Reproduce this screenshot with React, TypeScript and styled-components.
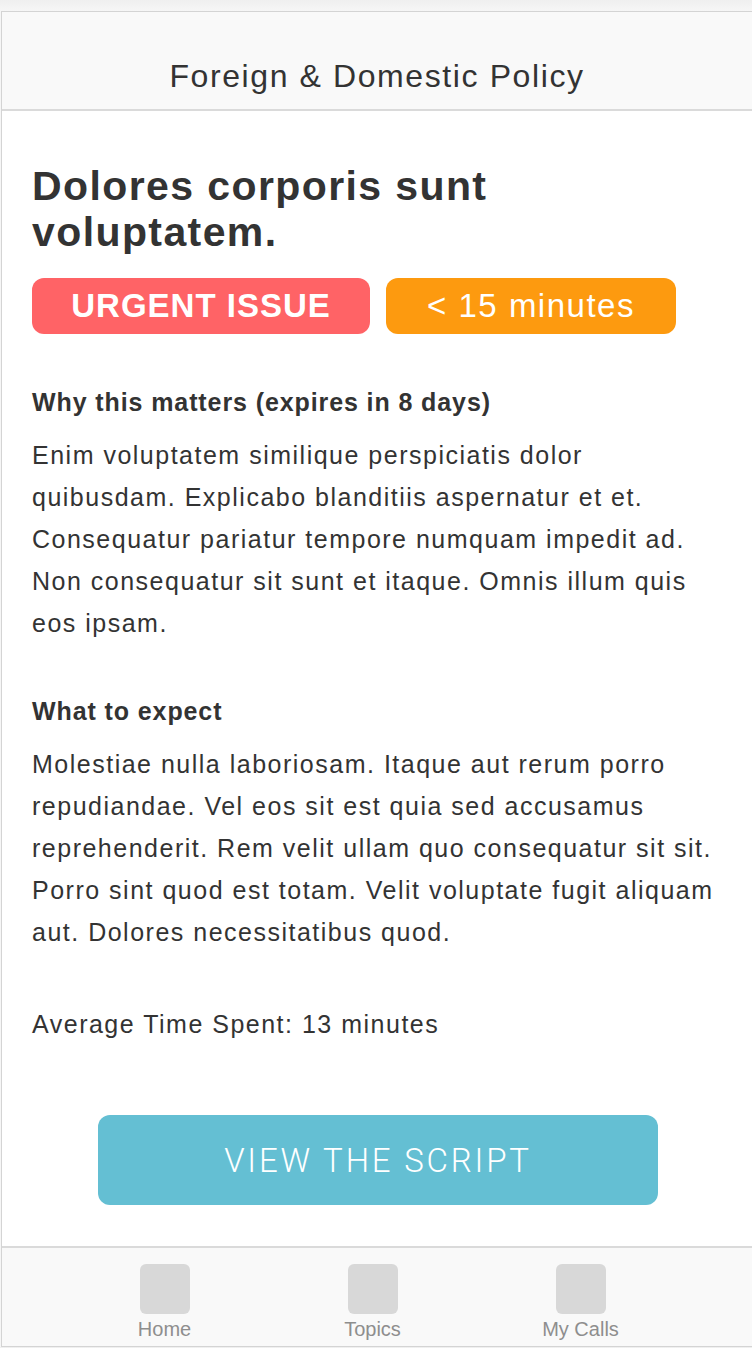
import React from "react";
import styled, { createGlobalStyle } from "styled-components";

const Global = createGlobalStyle`
  html, body { margin: 0; padding: 0; }
  body {
    background: linear-gradient(#efefef, #f6f6f6 11px, #f6f6f6);
    font-family: "Liberation Sans", Arial, sans-serif;
    color: #333;
  }
`;

const Frame = styled.div`
  margin: 11px 0 0 1px;
  height: 1334px;
  border-top: 1px solid #d4d4d4;
  border-left: 1px solid #d4d4d4;
  border-bottom: 1px solid #d4d4d4;
  background: #fff;
  display: flex;
  flex-direction: column;
`;

const Header = styled.header`
  height: 97px;
  flex: none;
  background: #f9f9f9;
  border-bottom: 2px solid #dadada;
  display: flex;
  align-items: flex-end;
  justify-content: center;
`;

const HeaderTitle = styled.h1`
  margin: 0 0 14px;
  font-size: 32px;
  letter-spacing: 1.6px;
  font-weight: 400;
  color: #333;
  line-height: 1.2;
`;

const Main = styled.main`
  flex: 1;
  padding: 52px 32px 0 30px;
  display: flex;
  flex-direction: column;
`;

const Title = styled.h2`
  margin: 0;
  font-size: 41px;
  letter-spacing: 1.4px;
  line-height: 46px;
  font-weight: 700;
  color: #333;
`;

const Badges = styled.div`
  display: flex;
  gap: 16px;
  margin-top: 23px;
`;

const Badge = styled.div<{ $bg: string; $w: number; $bold?: boolean }>`
  width: ${(p) => p.$w}px;
  height: 56px;
  border-radius: 12px;
  background: ${(p) => p.$bg};
  color: #fff;
  display: flex;
  align-items: center;
  justify-content: center;
  font-size: 33px;
  font-weight: ${(p) => (p.$bold ? 700 : 400)};
  letter-spacing: ${(p) => (p.$bold ? 1 : 1.5)}px;
`;

const SectionHeading = styled.h3`
  margin: 0;
  font-size: 25px;
  letter-spacing: 0.9px;
  font-weight: 700;
  line-height: 42px;
  color: #333;
`;

const Para = styled.p`
  margin: 0;
  font-size: 25px;
  letter-spacing: 1.5px;
  line-height: 42px;
  color: #333;
`;

const Section = styled.section<{ $top: number }>`
  margin-top: ${(p) => p.$top}px;
  display: flex;
  flex-direction: column;
  gap: 11px;
`;

const ButtonRow = styled.div`
  display: flex;
  justify-content: center;
  margin-top: 70px;
  padding-left: 4px;
`;

const ScriptButton = styled.button`
  width: 560px;
  height: 90px;
  border: none;
  border-radius: 12px;
  background: #64bfd3;
  color: #fff;
  font-family: Roboto, "Liberation Sans", sans-serif;
  font-weight: 300;
  font-size: 33px;
  letter-spacing: 2.8px;
  cursor: pointer;
`;

const TabBar = styled.nav`
  height: 98px;
  flex: none;
  background: #f9f9f9;
  border-top: 2px solid #dadada;
  display: flex;
  justify-content: center;
  padding-right: 9px;
`;

const Tab = styled.div`
  width: 208px;
  display: flex;
  flex-direction: column;
  align-items: center;
  padding-top: 16px;
`;

const TabIcon = styled.div`
  width: 50px;
  height: 50px;
  border-radius: 6px;
  background: #d8d8d8;
`;

const TabLabel = styled.span`
  margin-top: 3px;
  font-size: 20px;
  color: #8e8e8e;
  line-height: 24px;
`;

export default function App() {
  return (
    <>
      <Global />
      <Frame>
        <Header>
          <HeaderTitle>Foreign &amp; Domestic Policy</HeaderTitle>
        </Header>
        <Main>
          <Title>Dolores corporis sunt voluptatem.</Title>
          <Badges>
            <Badge $bg="#ff6366" $w={338} $bold>URGENT ISSUE</Badge>
            <Badge $bg="#fd9a0f" $w={290}>&lt; 15 minutes</Badge>
          </Badges>
          <Section $top={47}>
            <SectionHeading>Why this matters (expires in 8 days)</SectionHeading>
            <Para>
              Enim voluptatem similique perspiciatis dolor quibusdam. Explicabo blanditiis aspernatur et et.
              Consequatur pariatur tempore numquam impedit ad. Non consequatur sit sunt et itaque. Omnis illum
              quis eos ipsam.
            </Para>
          </Section>
          <Section $top={46}>
            <SectionHeading>What to expect</SectionHeading>
            <Para>
              Molestiae nulla laboriosam. Itaque aut rerum porro repudiandae. Vel eos sit est quia sed accusamus
              reprehenderit. Rem velit ullam quo consequatur sit sit. Porro sint quod est totam. Velit voluptate
              fugit aliquam aut. Dolores necessitatibus quod.
            </Para>
          </Section>
          <Section $top={50}>
            <Para>Average Time Spent: 13 minutes</Para>
          </Section>
          <ButtonRow>
            <ScriptButton>VIEW THE SCRIPT</ScriptButton>
          </ButtonRow>
        </Main>
        <TabBar>
          <Tab>
            <TabIcon />
            <TabLabel>Home</TabLabel>
          </Tab>
          <Tab>
            <TabIcon />
            <TabLabel>Topics</TabLabel>
          </Tab>
          <Tab>
            <TabIcon />
            <TabLabel>My Calls</TabLabel>
          </Tab>
        </TabBar>
      </Frame>
    </>
  );
}
